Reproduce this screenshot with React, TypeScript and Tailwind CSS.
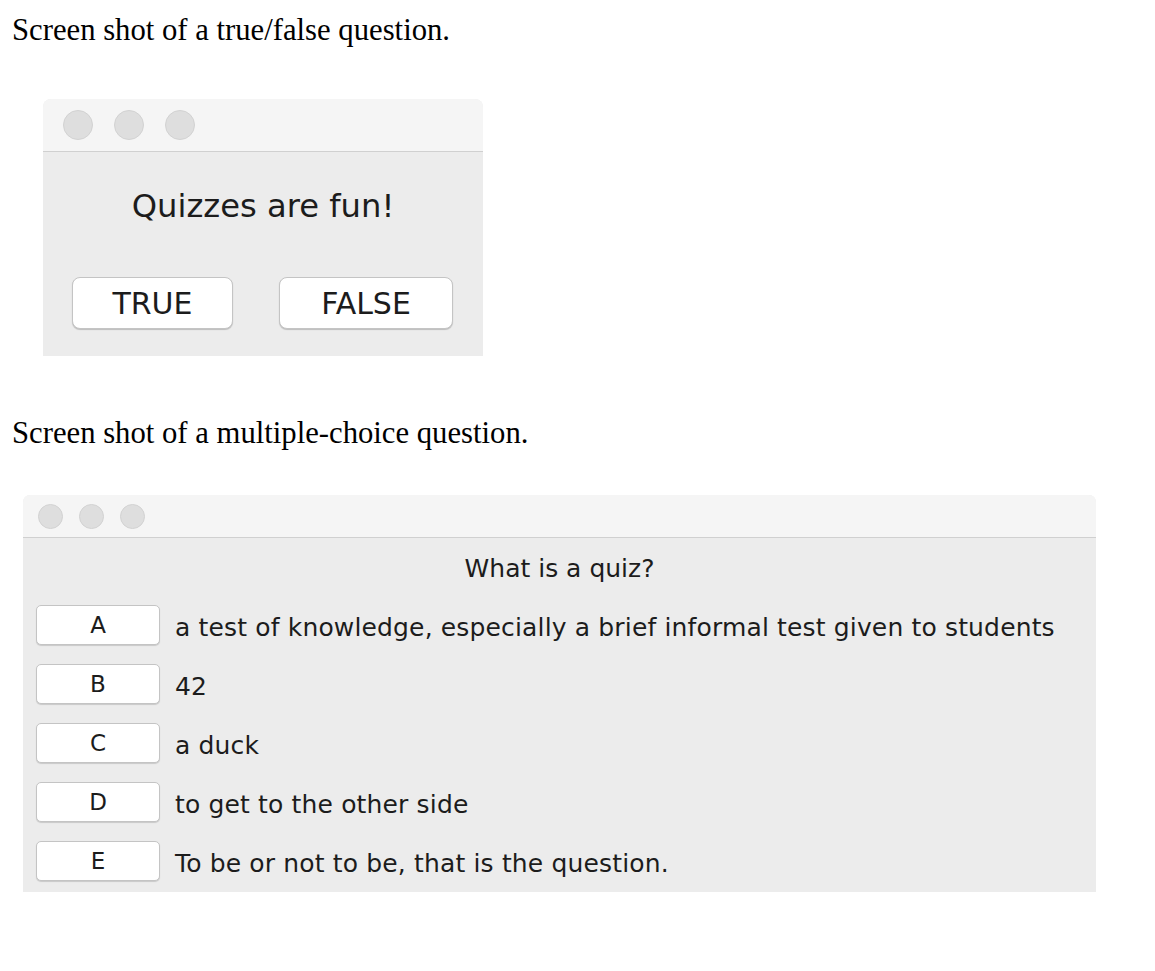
const options = [
  { key: "A", text: "a test of knowledge, especially a brief informal test given to students" },
  { key: "B", text: "42" },
  { key: "C", text: "a duck" },
  { key: "D", text: "to get to the other side" },
  { key: "E", text: "To be or not to be, that is the question." },
]

const serif = { fontFamily: '"Liberation Serif", "Times New Roman", serif' }
const sans = { fontFamily: '"DejaVu Sans", Verdana, sans-serif' }

const Dots = ({ size, gap }: { size: string; gap: string }) => (
  <div className={`flex ${gap}`}>
    {[0, 1, 2].map((i) => (
      <div key={i} className={`${size} rounded-full bg-[#dedede] border border-[#d2d2d2]`} />
    ))}
  </div>
)

const App = () => {
  return (
    <div className="min-h-[971px] w-[1155px] bg-white text-black">
      <p style={serif} className="pl-[12px] pt-[13px] text-[30.7px] leading-[34px]">
        Screen shot of a true/false question.
      </p>

      {/* true / false window */}
      <div style={sans} className="ml-[43px] mt-[52px] w-[440px] rounded-t-[8px] overflow-hidden bg-[#ececec]">
        <div className="h-[53px] flex items-center pl-[20px] bg-[#f5f5f5] border-b border-[#d0d0d0]">
          <Dots size="w-[30px] h-[30px]" gap="gap-[21px]" />
        </div>
        <div className="h-[204px] pt-[36px]">
          <p className="text-center text-[32.2px] leading-[36px] text-[#1c1c1c]">Quizzes are fun!</p>
          <div className="flex gap-[46px] pl-[29px] mt-[53px]">
            <button className="w-[161px] h-[52px] rounded-[8px] bg-white border border-[#c4c4c4] shadow-[0_1px_1px_rgba(0,0,0,0.2)] text-[30px] text-[#1c1c1c]">
              TRUE
            </button>
            <button className="w-[174px] h-[52px] rounded-[8px] bg-white border border-[#c4c4c4] shadow-[0_1px_1px_rgba(0,0,0,0.2)] text-[30px] text-[#1c1c1c]">
              FALSE
            </button>
          </div>
        </div>
      </div>

      <p style={serif} className="pl-[12px] mt-[60px] text-[30.7px] leading-[34px]">
        Screen shot of a multiple-choice question.
      </p>

      {/* multiple choice window */}
      <div style={sans} className="ml-[23px] mt-[45px] w-[1073px] rounded-t-[7px] overflow-hidden bg-[#ececec]">
        <div className="h-[43px] flex items-center pl-[15px] bg-[#f5f5f5] border-b border-[#d0d0d0]">
          <Dots size="w-[25px] h-[25px]" gap="gap-[16px]" />
        </div>
        <div className="pt-[16px] pb-[11px]">
          <p className="text-center text-[25px] leading-[30px] text-[#1c1c1c]">What is a quiz?</p>
          <div className="flex flex-col gap-[19px] mt-[21px] pl-[13px]">
            {options.map((o) => (
              <div key={o.key} className="flex items-center h-[40px]">
                <button className="w-[124px] h-[40px] rounded-[5px] bg-white border border-[#c4c4c4] shadow-[0_1px_1px_rgba(0,0,0,0.15)] text-[23px] leading-none text-[#1c1c1c]">
                  {o.key}
                </button>
                <span className="ml-[15px] pt-[5px] text-[25px] leading-[30px] tracking-[0.15px] text-[#1c1c1c]">{o.text}</span>
              </div>
            ))}
          </div>
        </div>
      </div>
    </div>
  )
}

export default App
